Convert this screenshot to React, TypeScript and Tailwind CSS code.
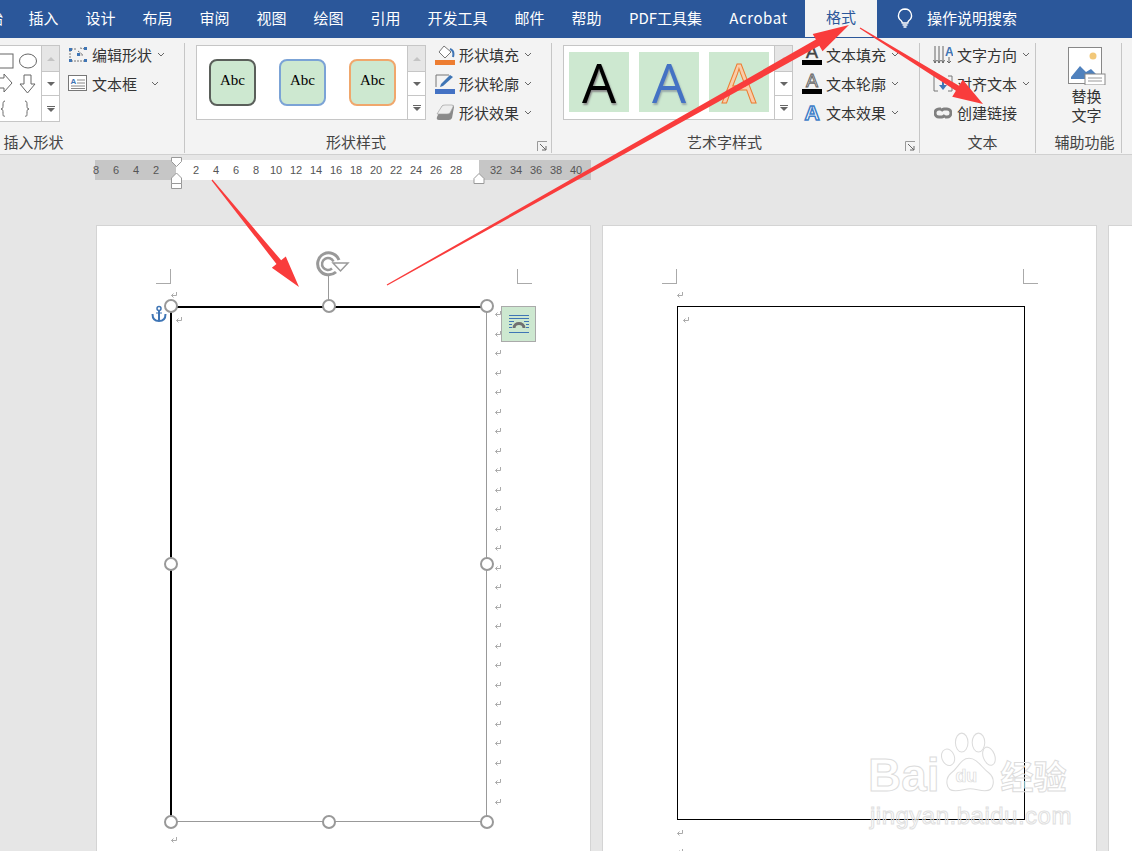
const cjk = "font-['Noto_Sans_CJK_SC','Noto_Sans',sans-serif]";

const TABS = [
  { label: "插入", w: "w-[57px]" },
  { label: "设计", w: "w-[57px]" },
  { label: "布局", w: "w-[57px]" },
  { label: "审阅", w: "w-[57px]" },
  { label: "视图", w: "w-[57px]" },
  { label: "绘图", w: "w-[57px]" },
  { label: "引用", w: "w-[57px]" },
  { label: "开发工具", w: "w-[87px]" },
  { label: "邮件", w: "w-[57px]" },
  { label: "帮助", w: "w-[57px]" },
  { label: "PDF工具集", w: "w-[101px]" },
  { label: "Acrobat", w: "w-[85px] tracking-[0.6px]" },
];

function Chevron({ className = "" }: { className?: string }) {
  return (
    <svg width="8" height="5" viewBox="0 0 8 5" className={className}>
      <path d="M1 1l3 3 3-3" fill="none" stroke="#666" strokeWidth="1" />
    </svg>
  );
}

function Launcher() {
  return (
    <svg width="11" height="11" viewBox="0 0 11 11">
      <path d="M.5 10V.5H10" fill="none" stroke="#999" />
      <path d="M3 3l6 6M9 5v4H5" fill="none" stroke="#666" />
    </svg>
  );
}

// up / down / expand buttons at the right of a style gallery
function GalleryScroll({ heights }: { heights: string }) {
  return (
    <div className={`flex w-[18px] flex-col border-l border-[#c6c6c6] ${heights}`}>
      <div className="flex h-[26px] items-center justify-center border-b border-[#c6c6c6] bg-[#e6e6e6]">
        <div className="h-0 w-0 border-x-[4px] border-b-[4px] border-x-transparent border-b-[#c4c4c4]" />
      </div>
      <div className="flex h-[24px] items-center justify-center border-b border-[#c6c6c6]">
        <div className="h-0 w-0 border-x-[4px] border-t-[4px] border-x-transparent border-t-[#666]" />
      </div>
      <div className="flex flex-1 flex-col items-center justify-center gap-[1px]">
        <div className="h-px w-[8px] bg-[#666]" />
        <div className="h-0 w-0 border-x-[4px] border-t-[4px] border-x-transparent border-t-[#666]" />
      </div>
    </div>
  );
}

function Cmd({ icon, label, chevron = "ml-[5px]" }: { icon: React.ReactNode; label: string; chevron?: string }) {
  return (
    <div className="flex h-[29px] items-center">
      <div className="flex w-[20px] justify-center">{icon}</div>
      <div className="w-[4px]" />
      <span className="text-[15px] leading-none whitespace-nowrap text-[#333]">{label}</span>
      {chevron && <Chevron className={chevron} />}
    </div>
  );
}

function GroupLabel({ children, launcher, className = "" }: { children: React.ReactNode; launcher?: boolean; className?: string }) {
  return (
    <div className={`relative mt-auto flex h-[22px] items-center justify-center pb-[2px] text-[15px] leading-none whitespace-nowrap text-[#444] ${className}`}>
      {children}
      {launcher && (
        <div className="absolute right-[3px] bottom-[1px]">
          <Launcher />
        </div>
      )}
    </div>
  );
}

function AbcSwatch({ border }: { border: string }) {
  return (
    <div className={`flex h-[47px] w-[47px] items-start justify-center rounded-[8px] border-2 bg-[#cde8d0] pt-[10px] font-['Liberation_Serif',serif] text-[15px] leading-[18px] text-black ${border}`}>
      Abc
    </div>
  );
}

function ArtSwatch({ className }: { className: string }) {
  return (
    <div className={`flex h-[60px] w-[60px] items-center justify-center bg-[#cde8d0] font-['Open_Sans',sans-serif] text-[54px] leading-none ${className}`}>
      A
    </div>
  );
}

function Ruler() {
  const left = [8, 6, 4, 2];
  const mid = [2, 4, 6, 8, 10, 12, 14, 16, 18, 20, 22, 24, 26, 28];
  const right = [32, 34, 36, 38, 40];
  const cell = "w-[20px] shrink-0 text-center";
  return (
    <div className="relative ml-[95px] flex h-[20px] w-[496px] font-['Liberation_Sans',sans-serif] text-[11px] leading-[20px] text-[#555]">
      <div className="flex w-[81px] justify-end bg-[#c6c6c6] pr-[10px]">
        {left.map((n) => (
          <span key={n} className={cell}>{n}</span>
        ))}
      </div>
      <div className="flex w-[303px] bg-white pl-[10px]">
        {mid.map((n) => (
          <span key={n} className={cell}>{n}</span>
        ))}
      </div>
      <div className="flex flex-1 bg-[#c6c6c6] pl-[7px]">
        {right.map((n) => (
          <span key={n} className={cell}>{n}</span>
        ))}
      </div>
      {/* indent markers */}
      <svg width="14" height="34" viewBox="0 0 14 34" className="absolute top-[-4px] left-[75px]">
        <path d="M1.500 1.500h10v4l-5 5-5-5z" fill="#fff" stroke="#999" />
        <path d="M6.500 17l5 5v5.500h-10V22z" fill="#fff" stroke="#999" />
        <path d="M1.500 27.500h10v5h-10z" fill="#fff" stroke="#999" />
      </svg>
      <svg width="12" height="11" viewBox="0 0 12 11" className="absolute top-[13px] left-[378px]">
        <path d="M6 .5l5 5v5H1v-5z" fill="#fff" stroke="#999" />
      </svg>
    </div>
  );
}

function Crop({ className }: { className: string }) {
  return <div className={`absolute h-[15px] w-[15px] border-[#aaa] ${className}`} />;
}

function Mark({ className }: { className: string }) {
  return (
    <svg width="8" height="8" viewBox="0 0 8 8" className={`absolute ${className}`}>
      <path d="M6.500 1v3.500H1.500M3.500 2.500l-2 2 2 2" fill="none" stroke="#aaa" />
    </svg>
  );
}

function Handle({ className }: { className: string }) {
  return <div className={`absolute h-[14px] w-[14px] rounded-full border-[2.5px] border-[#999] bg-white ${className}`} />;
}

function arrowPoints(x1: number, y1: number, x2: number, y2: number, head: number, wing: number, shaft: number, tail: number) {
  const len = Math.hypot(x2 - x1, y2 - y1);
  const ux = (x2 - x1) / len;
  const uy = (y2 - y1) / len;
  const bx = x2 - ux * head;
  const by = y2 - uy * head;
  const nx = -uy;
  const ny = ux;
  return [
    [x1 + nx * tail, y1 + ny * tail],
    [bx + nx * shaft, by + ny * shaft],
    [bx + nx * wing, by + ny * wing],
    [x2, y2],
    [bx - nx * wing, by - ny * wing],
    [bx - nx * shaft, by - ny * shaft],
    [x1 - nx * tail, y1 - ny * tail],
  ]
    .map((p) => p.join(","))
    .join(" ");
}

const ruleMarks = Array.from({ length: 26 }, (_, i) => i);

export default function App() {
  return (
    <div className={`relative h-[851px] w-[1132px] overflow-hidden bg-[#e6e6e6] ${cjk}`}>
      {/* tab strip */}
      <div className="flex h-[38px] items-center bg-[#2b579a] pb-[2px] text-[15px] text-white">
        <span className="ml-[-12px] w-[27px] text-left whitespace-nowrap">始</span>
        {TABS.map((t) => (
          <span key={t.label} className={`${t.w} text-center whitespace-nowrap`}>{t.label}</span>
        ))}
        <div className="ml-[4px] flex h-[38px] w-[72px] items-center justify-center bg-[#f3f3f3] pb-[2px] text-[#2b579a]">格式</div>
        <svg width="20" height="22" viewBox="0 0 20 22" className="ml-[18px]">
          <path d="M10 2a6.500 6.500 0 0 0-4 11.600c.8.700 1.200 1.400 1.200 2.400h5.600c0-1 .4-1.700 1.200-2.400A6.500 6.500 0 0 0 10 2z" fill="none" stroke="#fff" strokeWidth="1.300" />
          <path d="M7.500 18h5M8.500 20h3" stroke="#fff" strokeWidth="1.300" />
        </svg>
        <span className="ml-[12px] whitespace-nowrap">操作说明搜索</span>
      </div>

      {/* ribbon */}
      <div className="flex h-[117px] border-b border-[#d0d0d0] bg-[#f3f3f3]">
        {/* 插入形状 */}
        <div className="my-[5px] mb-[1px] flex w-[185px] shrink-0 flex-col border-r border-[#c6c6c6]">
          <div className="flex items-start pt-[2px]">
            <div className="flex h-[77px] w-[60px] border-y border-r border-[#c6c6c6] bg-white">
              <svg width="41" height="75" viewBox="0 0 41 75" className="shrink-0">
                <rect x="-6" y="8" width="19" height="14" fill="none" stroke="#666" />
                <ellipse cx="28" cy="15" rx="8.500" ry="7" fill="none" stroke="#666" />
                <path d="M-2 32h6v-4l8 9-8 9v-4h-6z" fill="none" stroke="#666" />
                <path d="M24 29h7v9h4l-7.500 9-7.500-9h4z" fill="none" stroke="#666" />
                <path d="M5 55c-2 0-2 2-2 4s0 4-2 4c2 0 2 2 2 4s0 4 2 3" fill="none" stroke="#666" />
                <path d="M25 55c2 0 2 2 2 4s0 4 2 4c-2 0-2 2-2 4s0 4-2 3" fill="none" stroke="#666" />
              </svg>
              <GalleryScroll heights="h-[75px]" />
            </div>
            <div className="mt-[-5px] ml-[8px] flex flex-col">
              <Cmd
                label="编辑形状"
                icon={
                  <svg width="20" height="18" viewBox="0 0 20 18">
                    <path d="M3 3h5M12 2l5 1M2 4v10M3 15h14M10 5l5 4-4 0" fill="none" stroke="#777" strokeDasharray="2 1" />
                    <rect x="1" y="2" width="3" height="3" fill="#3f75b5" />
                    <rect x="9" y="7" width="3" height="3" fill="#3f75b5" />
                    <rect x="16" y="1" width="3" height="3" fill="#3f75b5" />
                    <rect x="1" y="13" width="3" height="3" fill="#3f75b5" />
                    <rect x="16" y="13" width="3" height="3" fill="#3f75b5" />
                  </svg>
                }
              />
              <Cmd
                label="文本框"
                chevron="ml-[14px]"
                icon={
                  <svg width="20" height="17" viewBox="0 0 20 17">
                    <rect x=".5" y=".5" width="18" height="15" fill="#fff" stroke="#777" />
                    <path d="M9 5h8M9 8h8M3 11h14M3 13.500h14" stroke="#888" />
                    <text x="2.500" y="9" fontSize="8" fontWeight="700" fill="#3f75b5" fontFamily="Liberation Sans">A</text>
                  </svg>
                }
              />
            </div>
          </div>
          <GroupLabel>
            <span className="w-[181px] pl-[2px] text-left">插入形状</span>
          </GroupLabel>
        </div>

        {/* 形状样式 */}
        <div className="my-[5px] mb-[1px] flex w-[367px] shrink-0 flex-col border-r border-[#c6c6c6]">
          <div className="flex items-start pt-[2px] pl-[11px]">
            <div className="flex h-[75px] w-[230px] border border-[#c6c6c6] bg-white">
              <div className="flex flex-1 items-start gap-[23px] pt-[13px] pl-[12px]">
                <AbcSwatch border="border-[#5a5f5a]" />
                <AbcSwatch border="border-[#7ba3d6]" />
                <AbcSwatch border="border-[#f0a76c]" />
              </div>
              <GalleryScroll heights="h-[73px]" />
            </div>
            <div className="mt-[-5px] ml-[9px] flex flex-col">
              <Cmd
                label="形状填充"
                icon={
                  <svg width="20" height="20" viewBox="0 0 20 20">
                    <path d="M9 1l7 6-6 6-6-6z" fill="#fff" stroke="#777" />
                    <path d="M15 4c3 1 4 4 3 8" fill="none" stroke="#3f75b5" strokeWidth="2" />
                    <rect x="0" y="15" width="20" height="5" fill="#ed7d31" />
                  </svg>
                }
              />
              <Cmd
                label="形状轮廓"
                icon={
                  <svg width="20" height="20" viewBox="0 0 20 20">
                    <path d="M14 1H1v12" fill="none" stroke="#777" />
                    <path d="M5 13l1-3 9-9 3 2-10 9z" fill="#3f75b5" />
                    <rect x="0" y="15" width="20" height="5" fill="#4472c4" />
                  </svg>
                }
              />
              <Cmd
                label="形状效果"
                icon={
                  <svg width="20" height="20" viewBox="0 0 20 20">
                    <path d="M2 14L7 3q1-1 3-1h7q2 0 2 2l-2 11q-1 2-3 2H4q-3 0-2-3z" fill="#8a8a8a" />
                    <path d="M2 11L7 3q1-1 3-1h7q2 0 1 2l-3 6q-1 1-3 1z" fill="#eee" stroke="#999" strokeWidth=".6" />
                  </svg>
                }
              />
            </div>
          </div>
          <GroupLabel launcher className="pr-[24px]">形状样式</GroupLabel>
        </div>

        {/* 艺术字样式 */}
        <div className="my-[5px] mb-[1px] flex w-[368px] shrink-0 flex-col border-r border-[#c6c6c6]">
          <div className="flex items-start pt-[2px] pl-[11px]">
            <div className="flex h-[75px] w-[230px] border border-[#c6c6c6] bg-white">
              <div className="flex flex-1 gap-[10px] pt-[6px] pl-[5px]">
                <ArtSwatch className="text-black [text-shadow:1px_2px_2px_#8a8a8a]" />
                <ArtSwatch className="text-[#4472c4] [text-shadow:1px_2px_2px_#9aa]" />
                <ArtSwatch className="text-[#f9cdaa] [-webkit-text-stroke:1px_#ed7d31]" />
              </div>
              <GalleryScroll heights="h-[73px]" />
            </div>
            <div className="mt-[-5px] ml-[9px] flex flex-col">
              <Cmd
                label="文本填充"
                icon={
                  <div className="flex w-[20px] flex-col items-center">
                    <span className="font-['Liberation_Sans',sans-serif] text-[18px] leading-[15px] text-[#444] [-webkit-text-stroke:0.5px_#444]">A</span>
                    <div className="h-[5px] w-[20px] bg-black" />
                  </div>
                }
              />
              <Cmd
                label="文本轮廓"
                icon={
                  <div className="flex w-[20px] flex-col items-center">
                    <span className="font-['Liberation_Sans',sans-serif] text-[18px] leading-[15px] text-white [-webkit-text-stroke:1px_#666]">A</span>
                    <div className="h-[5px] w-[20px] bg-black" />
                  </div>
                }
              />
              <Cmd
                label="文本效果"
                icon={
                  <span className="font-['Liberation_Sans',sans-serif] text-[21px] leading-none font-bold text-white [-webkit-text-stroke:1.5px_#3f80c8]">A</span>
                }
              />
            </div>
          </div>
          <GroupLabel launcher className="pr-[22px]">艺术字样式</GroupLabel>
        </div>

        {/* 文本 */}
        <div className="my-[5px] mb-[1px] flex w-[116px] shrink-0 flex-col border-r border-[#c6c6c6]">
          <div className="mt-[-5px] flex flex-col pt-[2px] pl-[13px]">
            <Cmd
              label="文字方向"
              icon={
                <svg width="20" height="20" viewBox="0 0 20 20">
                  <path d="M2 1v17M6 1v17M10 1v17M0.500 15l1.500 3 1.500-3M4.500 15l1.500 3 1.500-3M8.500 15l1.500 3 1.500-3" fill="none" stroke="#666" />
                  <text x="12" y="11" fontSize="12" fontWeight="700" fill="#3f75b5" fontFamily="Liberation Sans">A</text>
                  <path d="M16 12v6M14 16l2 2 2-2" fill="none" stroke="#666" />
                </svg>
              }
            />
            <Cmd
              label="对齐文本"
              icon={
                <svg width="20" height="20" viewBox="0 0 20 20">
                  <path d="M5 2H1v15h4M15 2h4v15h-4" fill="none" stroke="#777" />
                  <path d="M10 3v11" stroke="#3f75b5" strokeWidth="2" />
                  <path d="M6 11l4 5 4-5z" fill="#3f75b5" />
                </svg>
              }
            />
            <Cmd
              label="创建链接"
              chevron=""
              icon={
                <svg width="18" height="12" viewBox="0 0 18 12">
                  <path d="M7 2H5a4 4 0 0 0 0 8h3a4 4 0 0 0 3-2M11 10h2a4 4 0 0 0 0-8h-3a4 4 0 0 0-3 2" fill="none" stroke="#808080" strokeWidth="3" />
                </svg>
              }
            />
          </div>
          <GroupLabel className="pl-[10px]">文本</GroupLabel>
        </div>

        {/* 辅助功能 */}
        <div className="my-[5px] mb-[1px] flex w-[86px] shrink-0 flex-col border-r border-[#c6c6c6]">
          <div className="flex flex-col items-center pt-[4px] pl-[16px] text-[15px] leading-[19px] text-[#333]">
            <svg width="38" height="38" viewBox="0 0 38 38">
              <rect x=".5" y=".5" width="33" height="36" fill="#fff" stroke="#888" />
              <circle cx="25" cy="9" r="3.500" fill="#f2c879" />
              <path d="M3 30l9-11 6 6 5-3 8 8v2H3z" fill="#4f81bd" />
              <rect x="17" y="27" width="20" height="11" fill="#fff" stroke="#888" />
              <path d="M20 31h14M20 34h14" stroke="#999" />
            </svg>
            <span className="mt-[1px]">替换</span>
            <span>文字</span>
          </div>
          <GroupLabel className="pl-[12px]">辅助功能</GroupLabel>
        </div>
      </div>

      {/* document */}
      <div className="pt-[5px]">
        <Ruler />
        <div className="mt-[45px] flex gap-[11px] pl-[96px]">
          {/* page 1 */}
          <div className="relative h-[700px] w-[495px] shrink-0 border border-b-0 border-[#d4d4d4] bg-white">
            <Crop className="top-[43px] left-[59px] border-r border-b" />
            <Crop className="top-[43px] left-[420px] border-b border-l" />
            <Mark className="top-[65px] left-[73px]" />
            <Mark className="top-[90px] left-[78px]" />
            <Mark className="top-[610px] left-[73px]" />

            {/* right hand paragraph marks */}
            <div className="absolute top-[84px] left-[397px] flex flex-col">
              {ruleMarks.map((i) => (
                <svg key={i} width="8" height="8" viewBox="0 0 8 8" className="mb-[11.5px]">
                  <path d="M6.500 1v3.500H1.500M3.500 2.500l-2 2 2 2" fill="none" stroke="#aaa" />
                </svg>
              ))}
            </div>

            {/* selected shape */}
            <div className="absolute top-[80px] left-[73px] h-[516px] w-[317px] border-t-2 border-r border-b border-l-2 border-t-black border-r-[#999] border-b-[#999] border-l-black" />
            <div className="absolute top-[50px] left-[231px] h-[30px] w-px bg-[#999]" />
            <Handle className="top-[73px] left-[67px]" />
            <Handle className="top-[73px] left-[225px]" />
            <Handle className="top-[73px] left-[383px]" />
            <Handle className="top-[331px] left-[67px]" />
            <Handle className="top-[331px] left-[383px]" />
            <Handle className="top-[589px] left-[67px]" />
            <Handle className="top-[589px] left-[225px]" />
            <Handle className="top-[589px] left-[383px]" />

            {/* rotate handle */}
            <svg width="36" height="30" viewBox="0 0 36 30" className="absolute top-[24px] left-[218px]">
              <path d="M21 22a11 11 0 1 1 3-12" fill="none" stroke="#999" strokeWidth="3" />
              <path d="M17 18.500a6 6 0 1 1 1.500-7" fill="none" stroke="#999" strokeWidth="2.500" />
              <path d="M18 13h15l-7.500 8z" fill="#fff" stroke="#999" strokeWidth="1.500" />
            </svg>

            {/* anchor */}
            <svg width="16" height="18" viewBox="0 0 16 18" className="absolute top-[79px] left-[54px]">
              <circle cx="8" cy="3.500" r="2" fill="none" stroke="#3f75b5" strokeWidth="1.500" />
              <path d="M8 5.500V16M1.500 9c0 5 3 7 6.500 7s6.500-2 6.500-7" fill="none" stroke="#3f75b5" strokeWidth="2" />
              <path d="M5 8h6" stroke="#3f75b5" />
            </svg>

            {/* layout options */}
            <div className="absolute top-[80px] left-[404px] flex h-[36px] w-[35px] items-center justify-center border border-[#aaa] bg-[#cde8d0]">
              <svg width="20" height="20" viewBox="0 0 20 20">
                <path d="M0 1.500h20M0 4.500h20M0 7.500h5M15 7.500h5M0 10.500h3M17 10.500h3M0 13.500h3M17 13.500h3M0 18.500h20" stroke="#3f75b5" />
                <path d="M5 14c0-6 10-6 10 0" fill="none" stroke="#707070" strokeWidth="3" />
              </svg>
            </div>
          </div>

          {/* page 2 */}
          <div className="relative h-[700px] w-[495px] shrink-0 border border-b-0 border-[#d4d4d4] bg-white">
            <Crop className="top-[43px] left-[59px] border-r border-b" />
            <Crop className="top-[43px] left-[420px] border-b border-l" />
            <Mark className="top-[65px] left-[73px]" />
            <Mark className="top-[90px] left-[79px]" />
            <Mark className="top-[603px] left-[73px]" />
            <Mark className="top-[622px] left-[73px]" />
            <div className="absolute top-[80px] left-[74px] h-[514px] w-[348px] border border-black" />
          </div>

          {/* page 3 */}
          <div className="h-[700px] w-[100px] shrink-0 border border-b-0 border-[#d4d4d4] bg-white" />
        </div>
      </div>

      {/* annotation arrows */}
      <svg width="1132" height="851" viewBox="0 0 1132 851" className="pointer-events-none absolute top-0 left-0">
        <polygon points={arrowPoints(212, 180, 299, 287, 32, 9, 3, 0.6)} fill="#f93c3c" />
        <polygon points={arrowPoints(387, 285, 849, 25, 36, 10, 3.5, 0.6)} fill="#f93c3c" />
        <polygon points={arrowPoints(860, 28, 983, 104, 30, 10, 3, 0.6)} fill="#f93c3c" />
      </svg>

      {/* watermark */}
      <div className="pointer-events-none absolute top-[730px] left-[868px] w-[210px] text-transparent">
        <div className="flex items-end font-['Liberation_Sans',sans-serif] text-[46px] leading-[40px] font-bold [-webkit-text-stroke:1px_#dcdcdc]">
          <span>Bai</span>
          <svg width="60" height="65" viewBox="0 0 52 62" className="ml-[-2px] shrink-0">
            <g fill="#fff" stroke="#dcdcdc">
              <ellipse cx="7" cy="26" rx="6" ry="8" transform="rotate(-20 7 26)" />
              <ellipse cx="20" cy="12" rx="6" ry="9" />
              <ellipse cx="36" cy="12" rx="6" ry="9" />
              <ellipse cx="46" cy="25" rx="5.500" ry="9" transform="rotate(-20 46 25)" />
              <path d="M27 27c-8 0-10 9-17 14-6 5-6 17 4 17 6 0 9-2 14-2s9 2 14 2c10 0 10-12 4-17-7-5-11-14-19-14z" />
            </g>
            <text x="14" y="50" fontSize="17" fill="#fff" stroke="#dcdcdc" strokeWidth=".7" fontFamily="Liberation Sans">du</text>
          </svg>
          <span className={`ml-[3px] text-[33px] whitespace-nowrap ${cjk}`}>经验</span>
        </div>
        <div className="mt-[9px] ml-[2px] font-['Liberation_Sans',sans-serif] text-[24px] leading-none tracking-[0.5px] whitespace-nowrap [-webkit-text-stroke:1px_#e0e0e0]">
          jingyan.baidu.com
        </div>
      </div>
    </div>
  );
}
